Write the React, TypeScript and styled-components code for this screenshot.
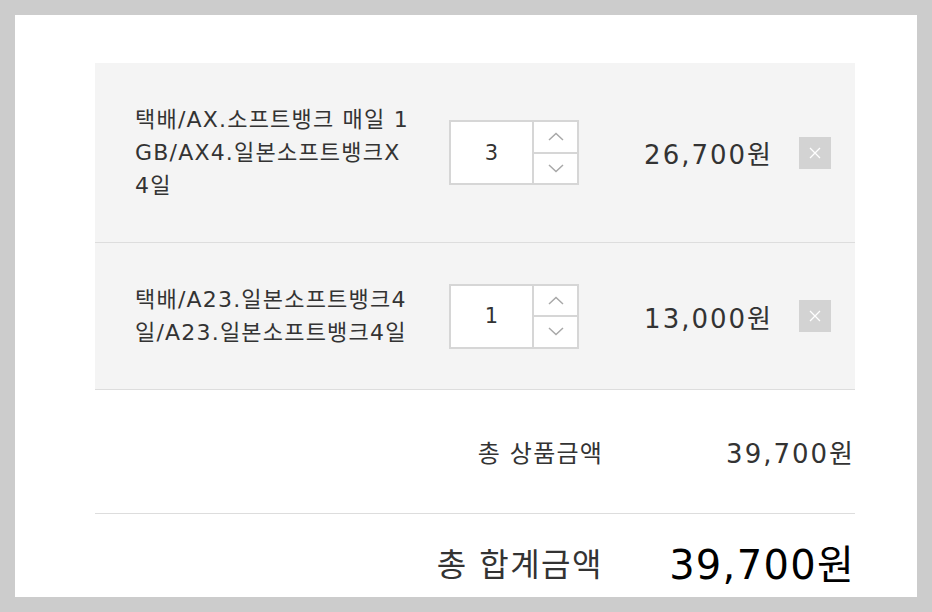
import React from "react";
import styled, { createGlobalStyle } from "styled-components";

interface CartItem {
  id: number;
  lines: string[];
  qty: number;
  price: number;
}

const items: CartItem[] = [
  { id: 1, lines: ["택배/AX.소프트뱅크 매일 1", "GB/AX4.일본소프트뱅크X", "4일"], qty: 3, price: 26700 },
  { id: 2, lines: ["택배/A23.일본소프트뱅크4", "일/A23.일본소프트뱅크4일"], qty: 1, price: 13000 },
];

const won = (n: number) => n.toLocaleString("en-US") + "원";

const GlobalStyle = createGlobalStyle`
  html, body {
    margin: 0;
    padding: 0;
    background: #cccccc;
  }
  body {
    font-family: "DejaVu Sans", "Noto Sans CJK KR", sans-serif;
    color: #333;
  }
`;

const Page = styled.div`
  width: 932px;
  height: 612px;
  padding: 15px;
  box-sizing: border-box;
`;

const Panel = styled.div`
  background: #fff;
  height: 582px;
  overflow: hidden;
  padding: 48px 62px 0 80px;
  box-sizing: border-box;
`;

const List = styled.div`
  background: #f4f4f4;
  border-bottom: 1px solid #dddddd;
`;

const Row = styled.div`
  display: grid;
  grid-template-columns: 314px 130px 1fr 32px;
  align-items: center;
  padding: 40px 24px 40px 40px;
  & + & {
    border-top: 1px solid #dddddd;
  }
`;

const Name = styled.div`
  font-size: 22px;
  line-height: 33px;
  letter-spacing: 1.2px;
  color: #333;
  white-space: nowrap;
`;

const NameLine = styled.div`
  display: block;
`;

const Spinner = styled.div`
  display: flex;
  height: 65px;
  border: 2px solid #d6d6d6;
  box-sizing: border-box;
  background: #fff;
`;

const QtyValue = styled.div`
  flex: 1;
  display: flex;
  align-items: center;
  justify-content: center;
  font-size: 21px;
  color: #333;
  border-right: 2px solid #d6d6d6;
`;

const Arrows = styled.div`
  width: 43px;
  display: flex;
  flex-direction: column;
`;

const ArrowButton = styled.button`
  flex: 1;
  border: 0;
  padding: 0;
  background: #fff;
  display: flex;
  align-items: center;
  justify-content: center;
  & + & {
    border-top: 2px solid #d6d6d6;
  }
`;

const Price = styled.div`
  text-align: right;
  padding-right: 26px;
  font-size: 26px;
  color: #333;
  letter-spacing: 2px;
`;

const DeleteButton = styled.button`
  width: 32px;
  height: 32px;
  border: 0;
  padding: 0;
  background: #d3d3d3;
  display: flex;
  align-items: center;
  justify-content: center;
`;

const SummaryRow = styled.div<{ $big?: boolean }>`
  display: flex;
  justify-content: flex-end;
  align-items: center;
  height: ${(p) => (p.$big ? "96px" : "123px")};
  border-bottom: ${(p) => (p.$big ? "none" : "1px solid #dddddd")};
`;

const SummaryLabel = styled.div<{ $big?: boolean }>`
  font-size: ${(p) => (p.$big ? "32px" : "24px")};
  color: #333;
  letter-spacing: ${(p) => (p.$big ? "1.5px" : "1.2px")};
`;

const SummaryValue = styled.div<{ $big?: boolean }>`
  width: 252px;
  text-align: right;
  font-size: ${(p) => (p.$big ? "40px" : "26px")};
  color: ${(p) => (p.$big ? "#000" : "#333")};
  letter-spacing: ${(p) => (p.$big ? "1.3px" : "2px")};
`;

const Chevron = ({ up }: { up?: boolean }) => (
  <svg width="16" height="9" viewBox="0 0 16 9">
    <path
      d={up ? "M1 8 L8 1.5 L15 8" : "M1 1 L8 7.5 L15 1"}
      fill="none"
      stroke="#a8a8a8"
      strokeWidth="1.5"
    />
  </svg>
);

const CloseIcon = () => (
  <svg width="12" height="12" viewBox="0 0 12 12">
    <path d="M1 1 L11 11 M11 1 L1 11" stroke="#fff" strokeWidth="1.3" />
  </svg>
);

export default function App() {
  const total = items.reduce((s, i) => s + i.price, 0);
  return (
    <>
      <GlobalStyle />
      <Page>
        <Panel>
          <List>
            {items.map((item) => (
              <Row key={item.id}>
                <Name>
                  {item.lines.map((l) => (
                    <NameLine key={l}>{l}</NameLine>
                  ))}
                </Name>
                <Spinner>
                  <QtyValue>{item.qty}</QtyValue>
                  <Arrows>
                    <ArrowButton>
                      <Chevron up />
                    </ArrowButton>
                    <ArrowButton>
                      <Chevron />
                    </ArrowButton>
                  </Arrows>
                </Spinner>
                <Price>{won(item.price)}</Price>
                <DeleteButton>
                  <CloseIcon />
                </DeleteButton>
              </Row>
            ))}
          </List>
          <SummaryRow>
            <SummaryLabel>총 상품금액</SummaryLabel>
            <SummaryValue>{won(total)}</SummaryValue>
          </SummaryRow>
          <SummaryRow $big>
            <SummaryLabel $big>총 합계금액</SummaryLabel>
            <SummaryValue $big>{won(total)}</SummaryValue>
          </SummaryRow>
        </Panel>
      </Page>
    </>
  );
}
